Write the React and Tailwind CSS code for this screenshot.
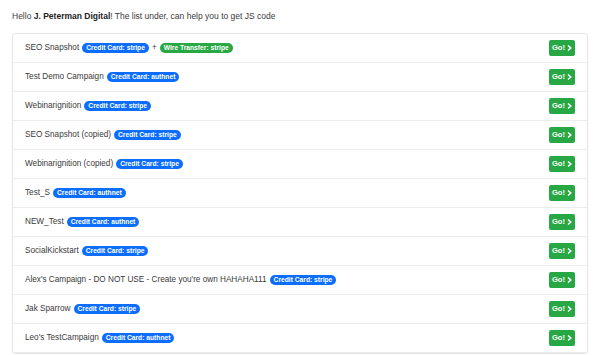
import React from "react";

const rows = [
  { name: "SEO Snapshot", badges: ["stripe"], wire: true },
  { name: "Test Demo Campaign", badges: ["authnet"] },
  { name: "Webinarignition", badges: ["stripe"] },
  { name: "SEO Snapshot (copied)", badges: ["stripe"] },
  { name: "Webinarignition (copied)", badges: ["stripe"] },
  { name: "Test_S", badges: ["authnet"] },
  { name: "NEW_Test", badges: ["authnet"] },
  { name: "SocialKickstart", badges: ["stripe"] },
  { name: "Alex's Campaign - DO NOT USE - Create you're own HAHAHA111", badges: ["stripe"] },
  { name: "Jak Sparrow", badges: ["stripe"] },
  { name: "Leo's TestCampaign", badges: ["authnet"] },
];

function Badge({ children, green }) {
  return (
    <span
      className={`inline-flex items-center h-[10px] px-[4px] rounded-full text-[6.7px] font-bold text-white leading-none ${
        green ? "bg-[#28a745]" : "bg-[#0d6efd]"
      }`}
    >
      {children}
    </span>
  );
}

export default function App() {
  return (
    <div className="w-[600px] h-[355px] overflow-hidden bg-white px-3 pt-[10px] font-['Liberation_Sans',Arial,sans-serif] text-[#3a3a3a]">
      <p className="text-[8.5px] leading-[13px] mb-[10px]">
        Hello <b className="text-[#222]">J. Peterman Digital</b>! The list under, can help you to get JS code
      </p>
      <div className="border border-[#e6e6e6] rounded-[3px]">
        {rows.map((r, i) => (
          <div
            key={i}
            className="flex items-center justify-between h-[29px] px-3 border-b border-[#ececec]"
          >
            <div className="flex items-center gap-[3px] text-[8.2px]">
              <span>{r.name}</span>
              <Badge>Credit Card: {r.badges[0]}</Badge>
              {r.wire && (
                <>
                  <span>+</span>
                  <Badge green>Wire Transfer: stripe</Badge>
                </>
              )}
            </div>
            <button className="flex items-center gap-[2px] h-[16px] w-[26px] justify-center rounded-[2px] bg-[#28a745] text-white text-[7.5px] font-bold">
              Go!
              <svg width="5" height="6" viewBox="0 0 5 6">
                <path d="M1 0.5 L3.8 3 L1 5.5" stroke="white" strokeWidth="1.5" fill="none" />
              </svg>
            </button>
          </div>
        ))}
      </div>
    </div>
  );
}
